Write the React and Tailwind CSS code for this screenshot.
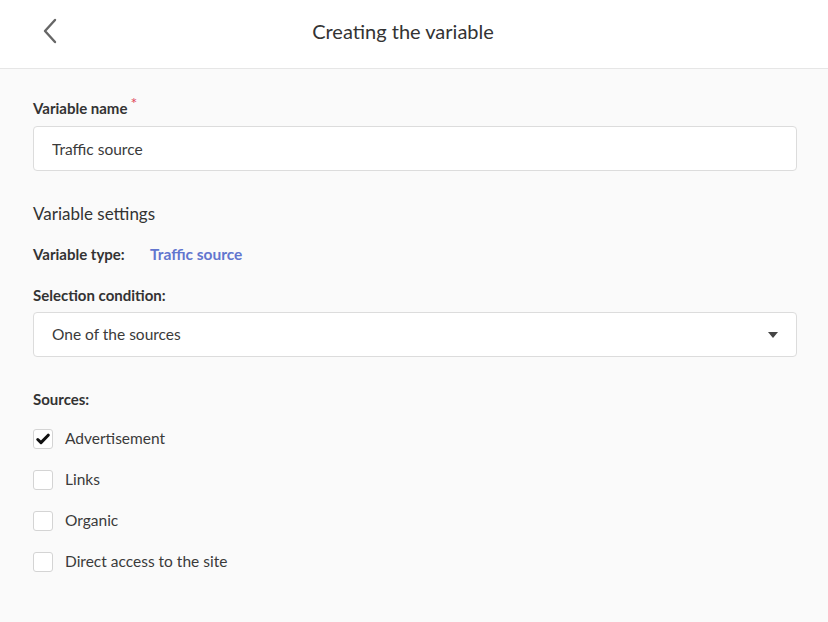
import React, { useState } from "react";

const sources = [
  { id: "ads", label: "Advertisement", checked: true },
  { id: "links", label: "Links", checked: false },
  { id: "organic", label: "Organic", checked: false },
  { id: "direct", label: "Direct access to the site", checked: false },
];

const Checkbox = ({ label, checked, onToggle }) => (
  <label className="flex items-center h-[20px] gap-[12px] cursor-pointer" onClick={onToggle}>
    <span className="w-[20px] h-[20px] rounded-[3px] border border-[#d4d4d4] bg-white flex items-center justify-center">
      {checked && (
        <svg width="14" height="12" viewBox="0 0 14 12">
          <path d="M1.8 6.5 L5 9.6 L12.2 2.2" fill="none" stroke="#111" strokeWidth="3" strokeLinecap="round" strokeLinejoin="round" />
        </svg>
      )}
    </span>
    <span className="text-[15.5px] text-[#3a3a3a]">{label}</span>
  </label>
);

const App = () => {
  const [name, setName] = useState("Traffic source");
  const [checked, setChecked] = useState(sources.map((s) => s.checked));

  const toggle = (i) => {
    setChecked(checked.map((c, j) => (j === i ? !c : c)));
  };

  return (
    <div className="min-h-[622px] bg-[#fafafa] font-['Lato',sans-serif] text-[#333]">
      <div className="h-[69px] bg-white border-b border-[#e6e6e6] flex items-center relative">
        <button className="absolute left-[38px] top-[16px] w-[24px] h-[30px] flex items-center justify-center">
          <svg width="16" height="26" viewBox="0 0 16 26">
            <path d="M13 2 L3 13 L13 24" fill="none" stroke="#666" strokeWidth="2.4" strokeLinecap="round" strokeLinejoin="round" />
          </svg>
        </button>
        <h1 className="w-full text-center pr-[22px] text-[20px] text-[#333] pb-[6px]">Creating the variable</h1>
      </div>

      <div className="pl-[33px] pr-[31px]">
        <div className="pt-[30px]">
          <div className="flex items-start text-[15px] font-bold h-[18px] leading-[18px]">
            Variable name
            <span className="text-[#e0465a] font-normal ml-[3px] -mt-[5px] text-[16px]">*</span>
          </div>
          <input
            className="mt-[9px] w-full h-[45px] rounded-[4px] border border-[#dcdcdc] bg-white px-[18px] text-[15.5px] text-[#3a3a3a] outline-none"
            value={name}
            onChange={(e) => setName(e.target.value)}
          />
        </div>

        <h2 className="mt-[32px] text-[17px] text-[#333] leading-[22px]">Variable settings</h2>

        <div className="mt-[20px] flex items-center text-[15px] leading-[18px]">
          <span className="font-bold w-[117px]">Variable type:</span>
          <span className="font-bold text-[#6276cf] text-[15.5px]">Traffic source</span>
        </div>

        <div className="mt-[23px] text-[15px] font-bold leading-[18px]">Selection condition:</div>
        <div className="mt-[8px] w-full h-[45px] rounded-[4px] border border-[#dcdcdc] bg-white pl-[18px] pr-[18px] flex items-center justify-between">
          <span className="text-[15.5px] text-[#3a3a3a]">One of the sources</span>
          <svg width="10" height="6" viewBox="0 0 10 6">
            <path d="M0 0 L10 0 L5 6 Z" fill="#444" />
          </svg>
        </div>

        <div className="mt-[33px] text-[15px] font-bold leading-[18px]">Sources:</div>
        <div className="mt-[21px] flex flex-col gap-[21px]">
          {sources.map((s, i) => (
            <Checkbox key={s.id} label={s.label} checked={checked[i]} onToggle={() => toggle(i)} />
          ))}
        </div>
      </div>
    </div>
  );
};

export default App;
